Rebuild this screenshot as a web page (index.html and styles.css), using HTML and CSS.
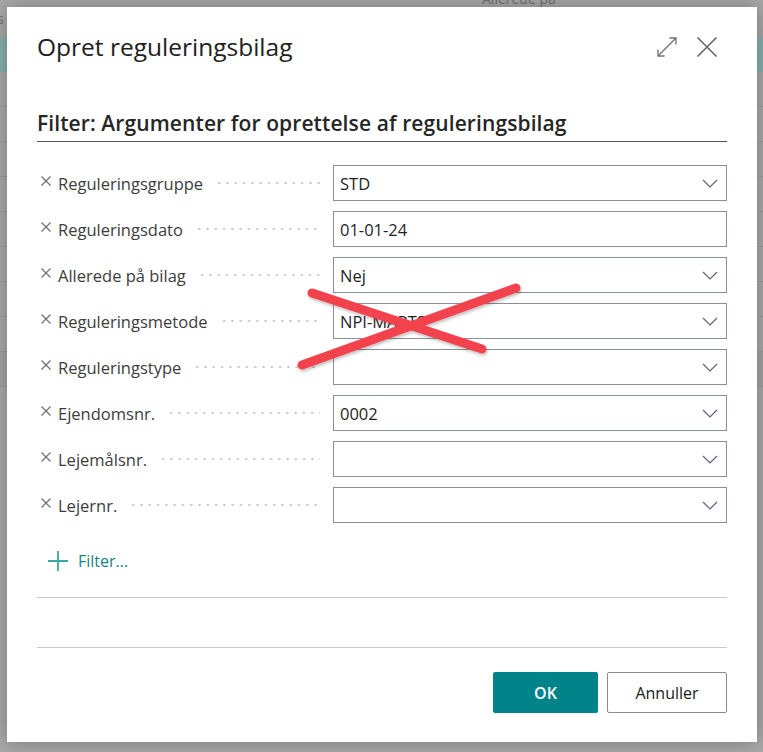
FILE: index.html
```html
<!DOCTYPE html>
<html lang="da">
<head>
<meta charset="utf-8">
<title>Opret reguleringsbilag</title>
<link rel="stylesheet" href="styles.css">
</head>
<body>
<div class="page">
  <div class="page-top">
    <span class="page-s">s</span>
    <span class="page-col">Allerede på</span>
  </div>
  <div class="page-band"></div>
  <div class="page-row"></div>
  <div class="page-row"></div>
  <div class="page-row"></div>
  <div class="page-row"></div>
  <div class="page-row"></div>
  <div class="page-row"></div>
  <div class="page-row"></div>
  <div class="page-row"></div>
  <div class="page-row page-row-last"></div>
</div>

<div class="dialog">
  <div class="dlg-header">
    <h1 class="dlg-title">Opret reguleringsbilag</h1>
    <div class="dlg-icons">
      <svg class="ico-expand" width="22" height="22" viewBox="0 0 22 22" fill="none" stroke="#707070" stroke-width="1.3">
        <path d="M2 20 L20 2"/>
        <path d="M2 13.5 V20 H8.5"/>
        <path d="M13.5 2 H20 V8.5"/>
      </svg>
      <svg class="ico-close" width="22" height="22" viewBox="0 0 22 22" fill="none" stroke="#666" stroke-width="1.6">
        <path d="M1.5 1.5 L20.5 20.5 M20.5 1.5 L1.5 20.5"/>
      </svg>
    </div>
  </div>

  <h2 class="section-title">Filter: Argumenter for oprettelse af reguleringsbilag</h2>

  <div class="fields">
    <div class="field">
      <div class="label"><svg class="x" width="10" height="10" viewBox="0 0 10 10"><path d="M0.5 0.5 L9.5 9.5 M9.5 0.5 L0.5 9.5" stroke="#6a6a6a" stroke-width="1.1"/></svg><span class="ltext">Reguleringsgruppe</span><span class="leader"></span></div>
      <div class="input"><span class="val">STD</span><svg class="chev" width="16" height="9" viewBox="0 0 16 9"><path d="M1 1 L8 8 L15 1" fill="none" stroke="#5f6372" stroke-width="1.2"/></svg></div>
    </div>
    <div class="field">
      <div class="label"><svg class="x" width="10" height="10" viewBox="0 0 10 10"><path d="M0.5 0.5 L9.5 9.5 M9.5 0.5 L0.5 9.5" stroke="#6a6a6a" stroke-width="1.1"/></svg><span class="ltext">Reguleringsdato</span><span class="leader"></span></div>
      <div class="input"><span class="val">01-01-24</span></div>
    </div>
    <div class="field">
      <div class="label"><svg class="x" width="10" height="10" viewBox="0 0 10 10"><path d="M0.5 0.5 L9.5 9.5 M9.5 0.5 L0.5 9.5" stroke="#6a6a6a" stroke-width="1.1"/></svg><span class="ltext">Allerede på bilag</span><span class="leader"></span></div>
      <div class="input"><span class="val">Nej</span><svg class="chev" width="16" height="9" viewBox="0 0 16 9"><path d="M1 1 L8 8 L15 1" fill="none" stroke="#5f6372" stroke-width="1.2"/></svg></div>
    </div>
    <div class="field">
      <div class="label"><svg class="x" width="10" height="10" viewBox="0 0 10 10"><path d="M0.5 0.5 L9.5 9.5 M9.5 0.5 L0.5 9.5" stroke="#6a6a6a" stroke-width="1.1"/></svg><span class="ltext">Reguleringsmetode</span><span class="leader"></span></div>
      <div class="input"><span class="val">NPI-MARTS</span><svg class="chev" width="16" height="9" viewBox="0 0 16 9"><path d="M1 1 L8 8 L15 1" fill="none" stroke="#5f6372" stroke-width="1.2"/></svg></div>
    </div>
    <div class="field">
      <div class="label"><svg class="x" width="10" height="10" viewBox="0 0 10 10"><path d="M0.5 0.5 L9.5 9.5 M9.5 0.5 L0.5 9.5" stroke="#6a6a6a" stroke-width="1.1"/></svg><span class="ltext">Reguleringstype</span><span class="leader"></span></div>
      <div class="input"><span class="val"></span><svg class="chev" width="16" height="9" viewBox="0 0 16 9"><path d="M1 1 L8 8 L15 1" fill="none" stroke="#6b5b7b" stroke-width="1.2"/></svg></div>
    </div>
    <div class="field">
      <div class="label"><svg class="x" width="10" height="10" viewBox="0 0 10 10"><path d="M0.5 0.5 L9.5 9.5 M9.5 0.5 L0.5 9.5" stroke="#6a6a6a" stroke-width="1.1"/></svg><span class="ltext">Ejendomsnr.</span><span class="leader"></span></div>
      <div class="input"><span class="val">0002</span><svg class="chev" width="16" height="9" viewBox="0 0 16 9"><path d="M1 1 L8 8 L15 1" fill="none" stroke="#6b5b7b" stroke-width="1.2"/></svg></div>
    </div>
    <div class="field">
      <div class="label"><svg class="x" width="10" height="10" viewBox="0 0 10 10"><path d="M0.5 0.5 L9.5 9.5 M9.5 0.5 L0.5 9.5" stroke="#6a6a6a" stroke-width="1.1"/></svg><span class="ltext">Lejemålsnr.</span><span class="leader"></span></div>
      <div class="input"><span class="val"></span><svg class="chev" width="16" height="9" viewBox="0 0 16 9"><path d="M1 1 L8 8 L15 1" fill="none" stroke="#6b5b7b" stroke-width="1.2"/></svg></div>
    </div>
    <div class="field">
      <div class="label"><svg class="x" width="10" height="10" viewBox="0 0 10 10"><path d="M0.5 0.5 L9.5 9.5 M9.5 0.5 L0.5 9.5" stroke="#6a6a6a" stroke-width="1.1"/></svg><span class="ltext">Lejernr.</span><span class="leader"></span></div>
      <div class="input"><span class="val"></span><svg class="chev" width="16" height="9" viewBox="0 0 16 9"><path d="M1 1 L8 8 L15 1" fill="none" stroke="#6b5b7b" stroke-width="1.2"/></svg></div>
    </div>
  </div>

  <div class="add-filter">
    <svg class="plus" width="20" height="20" viewBox="0 0 20 20"><path d="M10 0 V20 M0 10 H20" stroke="#3aa8a2" stroke-width="1.8"/></svg>
    <span class="add-text">Filter...</span>
  </div>

  <div class="sep sep1"></div>
  <div class="sep sep2"></div>

  <div class="actions">
    <button class="btn btn-ok">OK</button>
    <button class="btn btn-cancel">Annuller</button>
  </div>
</div>

<svg class="redx" width="763" height="752" viewBox="0 0 763 752">
  <defs>
    <filter id="sh" x="-10%" y="-10%" width="120%" height="130%">
      <feDropShadow dx="1" dy="2" stdDeviation="1.5" flood-color="#000" flood-opacity="0.25"/>
    </filter>
  </defs>
  <g filter="url(#sh)" stroke="#f2434d" stroke-width="9" stroke-linecap="round">
    <line x1="312" y1="293" x2="482" y2="349"/>
    <line x1="516" y1="288" x2="302" y2="365"/>
  </g>
</svg>
</body>
</html>
```

FILE: styles.css
```css
* { box-sizing: border-box; }
html, body { margin: 0; padding: 0; }
body {
  width: 763px;
  height: 752px;
  overflow: hidden;
  position: relative;
  background: #a8a8a8;
  font-family: "Open Sans", "Noto Sans", sans-serif;
}

/* dimmed page behind the dialog */
.page { width: 763px; }
.page-top {
  height: 37px;
  position: relative;
  font-size: 14px;
  color: #6e6e6e;
}
.page-s { position: absolute; left: -3px; top: 9px; }
.page-col { position: absolute; left: 482px; top: -11px; }
.page-band { height: 35px; background: #87adad; }
.page-row { height: 35px; border-bottom: 1px solid #9a9a9a; }
.page-row-last { background: #a3a3a3; }

/* dialog */
.dialog {
  position: absolute;
  left: 7px;
  top: 7px;
  width: 750px;
  height: 735px;
  background: #fff;
  box-shadow: 0 0 18px rgba(0,0,0,0.28);
  padding: 0 30px;
  display: flex;
  flex-direction: column;
}
.dlg-header {
  height: 80px;
  padding-top: 22px;
  display: flex;
  justify-content: space-between;
  align-items: flex-start;
}
.dlg-title {
  margin: 0;
  font-size: 24.5px;
  font-weight: 400;
  line-height: 36px;
  color: #212121;
  letter-spacing: 0;
}
.dlg-icons {
  display: flex;
  gap: 18px;
  padding-top: 7px;
  padding-right: 9px;
}
.section-title {
  margin: 22px 0 0 0;
  font-size: 21px;
  font-weight: 600;
  line-height: 28px;
  color: #262626;
  padding-bottom: 4px;
  border-bottom: 1px solid #505a64;
  letter-spacing: 0.1px;
}

.fields {
  margin-top: 23px;
  display: flex;
  flex-direction: column;
  gap: 10px;
}
.field {
  display: flex;
  height: 36px;
  align-items: center;
}
.label {
  width: 296px;
  padding-left: 4px;
  padding-right: 13px;
  display: flex;
  align-items: center;
  height: 100%;
  font-size: 16.5px;
  color: #3d3d3d;
}
.x {
  flex: none;
  margin-right: 7px;
  margin-top: -4px;
}
.ltext { white-space: nowrap; }
.leader {
  flex: 1;
  height: 4px;
  margin-left: 12px;
  background-image: radial-gradient(circle, #c6c6c6 0.9px, transparent 1.3px);
  background-size: 8.3px 4px;
  background-repeat: repeat-x;
  background-position: left center;
}
.input {
  flex: 1;
  height: 36px;
  border: 1px solid #8a9099;
  display: flex;
  align-items: center;
  justify-content: space-between;
  padding: 0 8px 0 6px;
  font-size: 16.5px;
  color: #1f1f1f;
}
.chev { flex: none; }

.add-filter {
  margin-top: 28px;
  display: flex;
  align-items: center;
  height: 20px;
  padding-left: 11px;
  gap: 10px;
}
.add-text {
  font-size: 16px;
  color: #18837f;
}

.sep { height: 1px; background: #c9c9c9; }
.sep1 { margin-top: 26px; }
.sep2 { margin-top: 49px; }

.actions {
  margin-top: 24px;
  display: flex;
  justify-content: flex-end;
  gap: 9px;
}
.btn {
  height: 41px;
  font-family: inherit;
  font-size: 16px;
  border-radius: 2px;
  cursor: pointer;
}
.btn-ok {
  width: 105px;
  background: #008489;
  color: #fff;
  border: none;
  font-weight: 600;
}
.btn-cancel {
  width: 120px;
  background: #fff;
  color: #212121;
  border: 1px solid #8a8a8a;
}

.redx {
  position: absolute;
  left: 0;
  top: 0;
  pointer-events: none;
}
```
